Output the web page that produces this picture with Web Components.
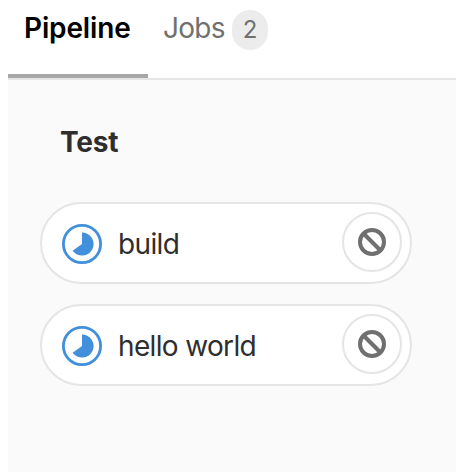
<!DOCTYPE html>
<html lang="en">
<head>
<meta charset="utf-8">
<title>Pipeline</title>
<style>
body { margin: 0; background: #fff; font-family: Inter, "Liberation Sans", sans-serif; font-size: 28px; }
</style>
</head>
<body>
<pipeline-view>
  <tab-bar slot="tabs">
    <tab-item active>Pipeline</tab-item>
    <tab-item count="2">Jobs</tab-item>
  </tab-bar>
  <pipeline-stage name="Test">
    <job-pill>build</job-pill>
    <job-pill>hello world</job-pill>
  </pipeline-stage>
</pipeline-view>
<script>
class BaseElement extends HTMLElement {
  constructor() {
    super();
    this.attachShadow({ mode: 'open' }).innerHTML = this.constructor.markup;
  }
}

customElements.define('pipeline-view', class extends BaseElement {
  static markup = `
    <style>
      :host { display: flex; flex-direction: column; box-sizing: border-box; height: 476px; padding: 0 0 4px 8px; overflow: hidden; }
      main { flex: 1; background: #fafafa; padding: 0 44px 0 32px; }
    </style>
    <slot name="tabs"></slot>
    <main><slot></slot></main>`;
});

customElements.define('tab-bar', class extends BaseElement {
  static markup = `
    <style>
      :host { display: flex; box-sizing: border-box; height: 80px; border-bottom: 2px solid #e5e5e5; }
    </style>
    <slot></slot>`;
});

customElements.define('tab-item', class extends BaseElement {
  static markup = `
    <style>
      :host { display: flex; align-items: flex-start; box-sizing: border-box; height: 78px; padding: 10px 15px 0; color: #707070; line-height: 36px; letter-spacing: -0.7px; white-space: nowrap; }
      :host([active]) { width: 140px; padding: 10px 16px 0; color: #000; font-weight: 600; border-bottom: 4px solid #a7a7a7; letter-spacing: -0.15px; }
      .label { display: block; }
      :host(:not([active])) .label { width: 69px; }
      .count { box-sizing: border-box; width: 36px; height: 40px; border-radius: 20px; background: #ececec; font-size: 24px; line-height: 40px; text-align: center; letter-spacing: 0; }
      .count[hidden] { display: none; }
    </style>
    <span class="label"><slot></slot></span><span class="count" hidden></span>`;
  connectedCallback() {
    const count = this.getAttribute('count');
    if (count !== null) {
      const badge = this.shadowRoot.querySelector('.count');
      badge.textContent = count;
      badge.hidden = false;
    }
  }
});

customElements.define('pipeline-stage', class extends BaseElement {
  static markup = `
    <style>
      :host { display: block; }
      h2 { margin: 0; padding: 44px 0 42px 20px; height: 36px; line-height: 36px; font-size: 28px; font-weight: 650; letter-spacing: -0.2px; color: #2e2e2e; }
      .jobs { display: flex; flex-direction: column; gap: 20px; }
    </style>
    <h2></h2>
    <div class="jobs"><slot></slot></div>`;
  connectedCallback() {
    this.shadowRoot.querySelector('h2').textContent = this.getAttribute('name');
  }
});

customElements.define('status-running', class extends BaseElement {
  static markup = `
    <style>
      :host { display: block; width: 40px; height: 40px; color: #428fdc; }
      svg { display: block; }
    </style>
    <svg width="40" height="40" viewBox="0 0 40 40" fill="currentColor">
      <circle cx="20" cy="20" r="18.6" fill="none" stroke="currentColor" stroke-width="2.8"/>
      <path d="M20 8.4A11.6 11.6 0 1 1 10.6 26.8L20 20Z"/>
    </svg>`;
});

customElements.define('cancel-button', class extends BaseElement {
  static markup = `
    <style>
      :host { display: grid; place-items: center; box-sizing: border-box; width: 60px; height: 60px; border: 2px solid #e5e5e5; border-radius: 50%; background: #fff; color: #707070; }
      svg { display: block; }
    </style>
    <svg width="28" height="28" viewBox="0 0 28 28" fill="none" stroke="currentColor" stroke-width="4">
      <circle cx="14" cy="14" r="12"/>
      <path d="M5.5 5.5L22.5 22.5"/>
    </svg>`;
});

customElements.define('job-pill', class extends BaseElement {
  static markup = `
    <style>
      :host { display: flex; align-items: flex-start; box-sizing: border-box; height: 82px; padding: 8px 8px 0 20px; border: 2px solid #e5e5e5; border-radius: 41px; background: #fff; color: #2e2e2e; line-height: 36px; letter-spacing: -0.65px; }
      status-running { margin-top: 12px; }
      .name { flex: 1; margin: 14px 0 0 16px; white-space: nowrap; }
    </style>
    <status-running></status-running>
    <span class="name"><slot></slot></span>
    <cancel-button></cancel-button>`;
});
</script>
</body>
</html>
